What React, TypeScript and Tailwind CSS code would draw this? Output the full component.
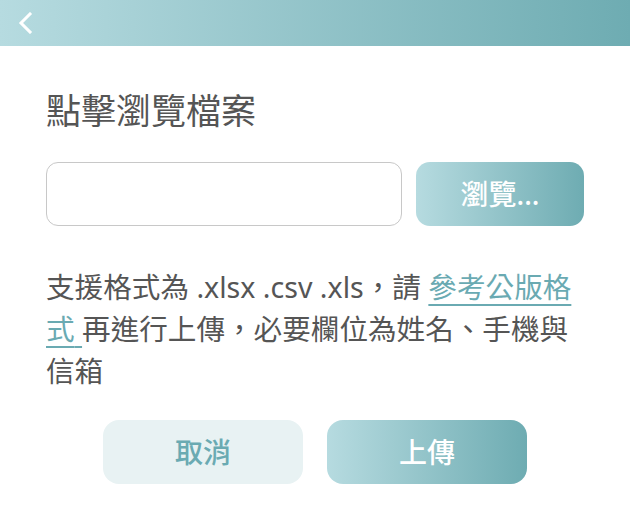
export default function App() {
  return (
    <div className="w-[630px] h-[520px] bg-white font-['Noto_Sans','Noto_Sans_CJK_TC',sans-serif] overflow-hidden">
      {/* header */}
      <div className="h-[46px] bg-gradient-to-r from-[#b6dbe0] to-[#6eacb2] flex items-center pl-[17px]">
        <svg width="16" height="22" viewBox="0 0 16 22" fill="none">
          <polyline
            points="13,2 4,11 13,20"
            stroke="white"
            strokeWidth="3"
            strokeLinecap="square"
            strokeLinejoin="miter"
          />
        </svg>
      </div>

      <div className="px-[46px] pt-[41px]">
        <h1 className="text-[35px] leading-[48px] text-[#555] font-normal">點擊瀏覽檔案</h1>

        <div className="flex gap-[14px] mt-[27px]">
          <input
            type="text"
            className="flex-1 h-[64px] rounded-[12px] border border-[#c8c8c8] px-4 outline-none"
          />
          <button className="w-[168px] h-[64px] rounded-[14px] bg-gradient-to-r from-[#b6dbe0] to-[#6eacb2] text-white text-[28px] font-medium">
            瀏覽...
          </button>
        </div>

        <p className="mt-[40px] text-[28.6px] leading-[42px] text-[#555]">
          支援格式為 .xlsx .csv .xls，請{" "}
          <a href="#" className="text-[#6aaab2] underline underline-offset-[6px] decoration-2">
            參考公版格式{" "}
          </a>
          再進行上傳，必要欄位為姓名、手機與信箱
        </p>

        <div className="flex justify-center gap-[24px] mt-[28px]">
          <button className="w-[200px] h-[64px] rounded-[16px] bg-[#e8f2f3] text-[#6aaab2] text-[28px] font-medium">
            取消
          </button>
          <button className="w-[200px] h-[64px] rounded-[16px] bg-gradient-to-r from-[#b6dbe0] to-[#6eacb2] text-white text-[28px] font-medium">
            上傳
          </button>
        </div>
      </div>
    </div>
  );
}
